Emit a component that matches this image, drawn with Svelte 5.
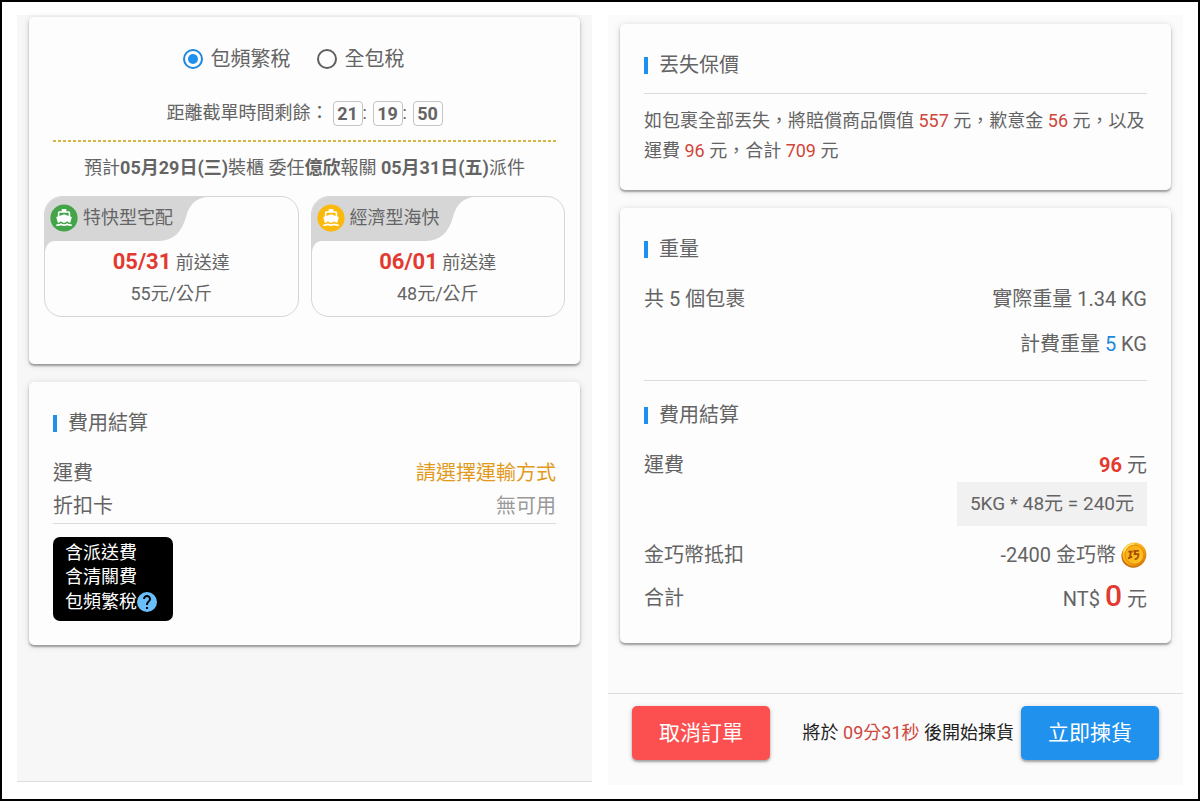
<script>
  let taxMode = $state('frequent');

  const taxModes = [
    { id: 'frequent', label: '包頻繁稅' },
    { id: 'all', label: '全包稅' }
  ];

  const countdown = ['21', '19', '50'];

  const shippingOptions = [
    { name: '特快型宅配', date: '05/31', rate: '55元/公斤', color: '#43a547' },
    { name: '經濟型海快', date: '06/01', rate: '48元/公斤', color: '#fbb90c' }
  ];
</script>

<main class="page">
  <section class="panel order">
    <div class="card shipping">
      <div class="tax">
        {#each taxModes as mode}
          <label class="choice">
            <input type="radio" name="tax" value={mode.id} bind:group={taxMode} />
            <span>{mode.label}</span>
          </label>
        {/each}
      </div>

      <div class="timer">
        <span>距離截單時間剩餘：</span>
        {#each countdown as part, i}
          {#if i > 0}<span class="colon">:</span>{/if}
          <b class="digits">{part}</b>
        {/each}
      </div>

      <div class="dashes"></div>

      <p class="schedule">預計<b>05月29日(三)</b>裝櫃 委任<b>億欣</b>報關 <b>05月31日(五)</b>派件</p>

      <div class="options">
        {#each shippingOptions as option}
          <button class="option" type="button">
            <svg class="tab" viewBox="0 0 164 58" width="164" height="58" aria-hidden="true">
              <path d="M0 0H164C151 0 144 8 141 20C137 35 128 44 114 44H10C4 44 1 48 0 55Z" fill="#d6d6d6" />
            </svg>
            <span class="option-head">
              <svg viewBox="0 0 28 28" width="28" height="28" aria-hidden="true">
                <circle cx="14" cy="14" r="13.6" fill={option.color} />
                <path
                  transform="translate(4.8 4.2) scale(.77)"
                  fill="#fff"
                  d="M20 21c-1.39 0-2.78-.47-4-1.32-2.44 1.71-5.56 1.71-8 0C6.78 20.53 5.39 21 4 21H2v2h2c1.38 0 2.74-.35 4-.99 2.52 1.29 5.48 1.29 8 0 1.26.65 2.62.99 4 .99h2v-2h-2zM3.95 19H4c1.6 0 3.02-.88 4-2 .98 1.12 2.4 2 4 2s3.02-.88 4-2c.98 1.12 2.4 2 4 2h.05l1.89-6.68c.08-.26.06-.54-.06-.78s-.34-.42-.6-.5L20 10.62V6c0-1.1-.9-2-2-2h-3V1H9v3H6c-1.1 0-2 .9-2 2v4.62l-1.29.42c-.26.08-.48.26-.6.5s-.15.52-.06.78L3.95 19zM6 6h12v3.97L12 8 6 9.97V6z"
                />
              </svg>
              <span>{option.name}</span>
            </span>
            <span class="arrival"><b>{option.date}</b> 前送達</span>
            <span class="rate">{option.rate}</span>
          </button>
        {/each}
      </div>
    </div>

    <div class="card">
      <h2>費用結算</h2>
      <div class="rows">
        <div class="row slim"><span>運費</span><span class="prompt">請選擇運輸方式</span></div>
        <div class="row slim ruled"><span>折扣卡</span><span class="muted">無可用</span></div>
      </div>
      <div class="included">
        <span>含派送費</span>
        <span>含清關費</span>
        <span class="with-help">
          包頻繁稅
          <button class="help" type="button" aria-label="說明">
            <svg viewBox="2 2 20 20" width="20" height="20" aria-hidden="true">
              <circle cx="12" cy="12" r="10" fill="#69bffb" />
              <path
                fill="#000"
                d="M13 19h-2v-2h2v2zM15.07 11.25l-.9.92C13.45 12.9 13 13.5 13 15h-2v-.5c0-1.1.45-2.1 1.17-2.83l1.24-1.26c.37-.36.59-.86.59-1.41 0-1.1-.9-2-2-2s-2 .9-2 2H8c0-2.21 1.79-4 4-4s4 1.79 4 4c0 .88-.36 1.68-.93 2.25z"
              />
            </svg>
          </button>
        </span>
      </div>
    </div>
  </section>

  <section class="panel picking">
    <div class="cards">
      <div class="card">
        <h2>丟失保價</h2>
        <hr />
        <p class="terms">
          如包裹全部丟失，將賠償商品價值 <em>557</em> 元，歉意金 <em>56</em> 元，以及運費 <em>96</em> 元，合計 <em>709</em> 元
        </p>
      </div>

      <div class="card">
        <h2>重量</h2>
        <div class="weights">
          <div class="row tall"><span>共 5 個包裹</span><span>實際重量 1.34 KG</span></div>
          <div class="row tall end"><span>計費重量 <span class="blue">5</span> KG</span></div>
        </div>
        <hr />
        <h2 class="second">費用結算</h2>
        <div class="fees">
          <div class="row"><span>運費</span><span><b class="red">96</b> 元</span></div>
          <div class="formula">5KG * 48元 = 240元</div>
          <div class="row coins">
            <span>金巧幣抵扣</span>
            <span class="coin-value">
              -2400 金巧幣
              <svg viewBox="0 0 26 26" width="26" height="26" aria-hidden="true">
                <defs>
                  <linearGradient id="coin-rim" x1="0" y1="0" x2="1" y2="1">
                    <stop offset="0" stop-color="#ffd83a" />
                    <stop offset=".55" stop-color="#f9a512" />
                    <stop offset="1" stop-color="#c9690a" />
                  </linearGradient>
                  <linearGradient id="coin-face" x1="0" y1="0" x2="1" y2="1">
                    <stop offset="0" stop-color="#f7a80f" />
                    <stop offset="1" stop-color="#ffc928" />
                  </linearGradient>
                </defs>
                <ellipse cx="12.4" cy="14" rx="12" ry="11.8" fill="#c76a0b" />
                <ellipse cx="13.4" cy="12.6" rx="12" ry="12" fill="url(#coin-rim)" />
                <ellipse cx="13.4" cy="12.6" rx="9.4" ry="9.6" fill="url(#coin-face)" stroke="#e88a08" stroke-width="1" />
                <path d="M3.4 9.5C5 5 8.600 2.300 13 2" fill="none" stroke="#fff08a" stroke-width="1.200" />
                <path
                  d="M7.400 9.600h4.200M9.800 9.600l-.8 5M7 16.400l4.200-1.800M12.400 8.800h5.400M14.400 8.800l-.8 3.400h3.800c0 2.400-.8 5.200-3.700 4.800"
                  fill="none" stroke="#a34d05" stroke-width="1.800"
                />
              </svg>
            </span>
          </div>
          <div class="row total"><span>合計</span><span>NT$ <b class="sum">0</b> 元</span></div>
        </div>
      </div>
    </div>

    <footer>
      <button class="action cancel" type="button">取消訂單</button>
      <span class="notice">將於 <em>09分31秒</em> 後開始揀貨</span>
      <button class="action start" type="button">立即揀貨</button>
    </footer>
  </section>
</main>

<style>
  :global(body) {
    background: #fff;
  }

  .page,
  .page * {
    box-sizing: border-box;
  }

  .page {
    display: grid;
    grid-template-columns: 1fr 1fr;
    gap: 16px;
    min-height: 100vh;
    padding: 13px 15px 14px;
    border: 2px solid #000;
    color: #646464;
    font-family: Roboto, "Noto Sans CJK TC", sans-serif;
    font-size: 18px;
  }

  button {
    padding: 0;
    border: 0;
    background: none;
    color: inherit;
    font: inherit;
    cursor: pointer;
  }

  p,
  h2 {
    margin: 0;
    font-weight: 400;
  }

  em {
    color: #cf463b;
    font-style: normal;
  }

  .panel {
    display: flex;
    flex-direction: column;
    min-width: 0;
  }

  .order {
    gap: 18px;
    margin-bottom: 3px;
    padding: 2px 12px 12px;
    border-bottom: 1px solid #dedede;
    background: #f7f7f7;
  }

  .picking {
    background: #fbfbfb;
  }

  .cards {
    display: flex;
    flex-direction: column;
    gap: 18px;
    padding: 9px 12px 32px;
  }

  .card {
    padding: 26px 24px 24px;
    border-radius: 5px;
    background: #fdfdfd;
    box-shadow:
      0 2px 2px rgba(0, 0, 0, 0.32),
      0 1px 7px rgba(0, 0, 0, 0.14);
  }

  .card.shipping {
    padding: 24px 15px 47px;
  }

  h2 {
    display: flex;
    align-items: center;
    gap: 11px;
    font-size: 20px;
    line-height: 30px;
  }

  h2::before {
    content: "";
    width: 4px;
    height: 17px;
    background: #1e90ee;
  }

  hr {
    height: 1px;
    margin: 13px 0 0;
    border: 0;
    background: #dcdcdc;
  }

  .tax {
    display: flex;
    justify-content: center;
    gap: 26px;
    padding-right: 22px;
    font-size: 20px;
    line-height: 36px;
  }

  .choice {
    display: flex;
    align-items: center;
    gap: 8px;
  }

  .choice input {
    display: grid;
    place-items: center;
    width: 20px;
    height: 20px;
    margin: 0;
    border: 2px solid #606060;
    border-radius: 50%;
    appearance: none;
  }

  .choice input:checked {
    border-color: #1e88dd;
  }

  .choice input:checked::before {
    content: "";
    width: 10px;
    height: 10px;
    border-radius: 50%;
    background: #1e90ee;
  }

  .timer {
    display: flex;
    align-items: center;
    justify-content: center;
    margin-top: 21px;
    line-height: 30px;
  }

  .colon {
    width: 10px;
  }

  .digits {
    width: 30px;
    border: 1px solid #c4c4c4;
    border-radius: 4px;
    line-height: 23px;
    text-align: center;
  }

  .timer span + .digits:nth-child(2) {
    margin-left: 4px;
  }

  .dashes {
    height: 2px;
    margin: 12px 9px 0;
    background: repeating-linear-gradient(90deg, #d9b548 0 3px, transparent 3px 5px);
  }

  .schedule {
    margin-top: 12px;
    line-height: 28px;
    text-align: center;
  }

  .options {
    display: grid;
    grid-template-columns: 1fr 1fr;
    gap: 12px;
    margin-top: 14px;
  }

  .option {
    position: relative;
    display: flex;
    flex-direction: column;
    align-items: center;
    overflow: hidden;
    padding-bottom: 8px;
    border: 1px solid #d6d6d6;
    border-radius: 18px;
  }

  .tab {
    position: absolute;
    top: 0;
    left: 0;
  }

  .option-head {
    position: relative;
    display: flex;
    align-items: center;
    align-self: stretch;
    gap: 5px;
    height: 43px;
    padding: 0 0 2px 5px;
    line-height: 24px;
  }

  .arrival {
    margin-top: 5px;
    line-height: 34px;
  }

  .arrival b {
    color: #e23a30;
    font-size: 22px;
  }

  .rate {
    line-height: 28px;
  }

  .row {
    display: flex;
    align-items: center;
    justify-content: space-between;
    font-size: 20px;
    line-height: 34px;
  }

  .rows {
    margin-top: 19px;
  }

  .slim {
    line-height: 33px;
  }

  .ruled {
    border-bottom: 1px solid #dcdcdc;
  }

  .prompt {
    color: #e29a1c;
  }

  .muted {
    color: #999;
  }

  .included {
    display: inline-flex;
    flex-direction: column;
    margin-top: 13px;
    padding: 4px 16px 6px 12px;
    border-radius: 7px;
    background: #000;
    color: #fff;
    line-height: 24px;
    vertical-align: top;
  }

  .with-help {
    display: flex;
    align-items: center;
    line-height: 26px;
  }

  .help {
    display: flex;
  }

  .terms {
    margin-top: 12px;
    line-height: 30px;
  }

  .weights {
    margin-top: 13px;
  }

  .tall {
    line-height: 45px;
  }

  .end {
    justify-content: flex-end;
  }

  .blue {
    color: #1e88dd;
  }

  .red {
    color: #e23a30;
  }

  .second {
    margin-top: 19px;
  }

  .fees {
    display: flex;
    flex-direction: column;
    margin-top: 18px;
  }

  .formula {
    align-self: flex-end;
    padding: 0 13px;
    background: #f1f1f1;
    font-size: 19px;
    line-height: 44px;
  }

  .coins {
    margin-top: 12px;
  }

  .coin-value {
    display: flex;
    align-items: center;
    gap: 5px;
  }

  .total {
    margin-top: 4px;
    line-height: 40px;
  }

  .sum {
    color: #e23a30;
    font-size: 30px;
    font-weight: 500;
  }

  footer {
    display: flex;
    align-items: center;
    gap: 7px;
    margin-top: auto;
    padding: 12px 24px 25px;
    border-top: 1px solid #dedede;
  }

  .notice {
    margin-left: auto;
    padding-bottom: 4px;
    color: #222;
  }

  .action {
    padding: 0 27px;
    border-radius: 5px;
    color: #fff;
    font-size: 21px;
    line-height: 54px;
    box-shadow:
      0 2px 2px rgba(0, 0, 0, 0.25),
      0 1px 5px rgba(0, 0, 0, 0.2);
  }

  .cancel {
    background: #fc5050;
  }

  .start {
    background: #2092ed;
  }
</style>
